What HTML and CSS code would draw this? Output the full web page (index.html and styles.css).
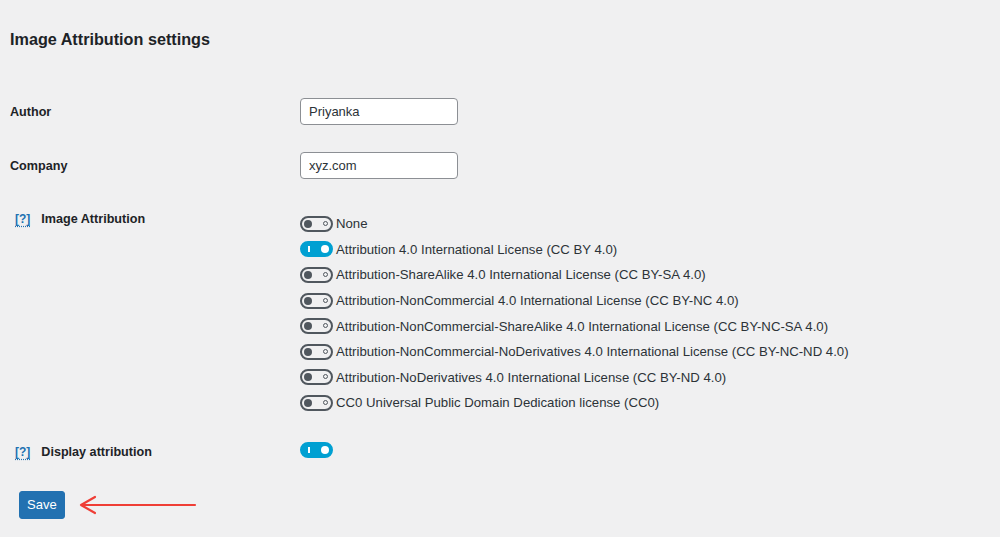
FILE: index.html
```html
<!DOCTYPE html>
<html lang="en">
<head>
    <meta charset="UTF-8">
    <title>Image Attribution settings</title>
    <link rel="stylesheet" href="styles.css">
</head>
<body>

<div class="wrap">
    <h2 class="page-title">Image Attribution settings</h2>

    <div class="form-row">
        <div class="label">Author</div>
        <div class="field"><input type="text" class="text-input" value="Priyanka"></div>
    </div>

    <div class="form-row">
        <div class="label">Company</div>
        <div class="field"><input type="text" class="text-input" value="xyz.com"></div>
    </div>

    <div class="form-row top">
        <div class="label"><a class="help" href="#">[?]</a>Image Attribution</div>
        <div class="field">
            <ul class="options">
                <li><span class="toggle"></span>None</li>
                <li><span class="toggle on"></span>Attribution 4.0 International License (CC BY 4.0)</li>
                <li><span class="toggle"></span>Attribution-ShareAlike 4.0 International License (CC BY-SA 4.0)</li>
                <li><span class="toggle"></span>Attribution-NonCommercial 4.0 International License (CC BY-NC 4.0)</li>
                <li><span class="toggle"></span>Attribution-NonCommercial-ShareAlike 4.0 International License (CC BY-NC-SA 4.0)</li>
                <li><span class="toggle"></span>Attribution-NonCommercial-NoDerivatives 4.0 International License (CC BY-NC-ND 4.0)</li>
                <li><span class="toggle"></span>Attribution-NoDerivatives 4.0 International License (CC BY-ND 4.0)</li>
                <li><span class="toggle"></span>CC0 Universal Public Domain Dedication license (CC0)</li>
            </ul>
        </div>
    </div>

    <div class="form-row display">
        <div class="label"><a class="help" href="#">[?]</a>Display attribution</div>
        <div class="field"><span class="toggle on"></span></div>
    </div>

    <div class="submit-row">
        <button class="save-btn">Save</button>
        <!-- red arrow pointing at the button -->
        <svg class="arrow" width="120" height="22" viewBox="0 0 120 22">
            <path d="M4 11 H118 M4 11 L18 3 M4 11 L18 19" fill="none" stroke="#ef3e36" stroke-width="2.2" stroke-linecap="round"/>
        </svg>
    </div>
</div>

</body>
</html>
```

FILE: styles.css
```css
body {
    margin: 0;
    background-color: #f0f0f1;
    color: #1d2327;
    font-family: "Liberation Sans", Arial, sans-serif;
    font-size: 13px;
}
.wrap {
    padding: 28px 0 0 10px;
}
.page-title {
    margin: 0 0 48px 0;
    font-size: 16.2px;
    line-height: 22px;
    font-weight: 700;
}
.form-row {
    display: grid;
    grid-template-columns: 290px 1fr;
    align-items: center;
    margin-bottom: 27px;
}
.form-row.top {
    align-items: start;
    margin-top: 30px;
    margin-bottom: 26px;
}
.form-row.display {
    height: 20px;
    margin-bottom: 29px;
}
.label {
    font-size: 12.6px;
    font-weight: 700;
    line-height: 20px;
}
.help {
    color: #2271b1;
    font-size: 12px;
    margin: 0 11px 0 5px;
    text-decoration: underline;
    text-decoration-style: dotted;
    text-underline-offset: 3px;
}
.text-input {
    box-sizing: border-box;
    width: 158px;
    height: 27px;
    padding: 0 8px;
    border: 1px solid #8c8f94;
    border-radius: 4px;
    background: #fff;
    color: #2c3338;
    font-family: inherit;
    font-size: 13px;
}
.options {
    list-style: none;
    margin: 2px 0 0 0;
    padding: 0;
}
.options li {
    display: flex;
    align-items: center;
    height: 25.6px;
    font-size: 13.2px;
    color: #2c3338;
}
.toggle {
    box-sizing: border-box;
    position: relative;
    display: inline-block;
    width: 33px;
    height: 16px;
    margin-right: 3px;
    border: 2px solid #50575e;
    border-radius: 8px;
    background: transparent;
}
/* knob on the left when off */
.toggle::before {
    content: "";
    position: absolute;
    left: 2px;
    top: 2px;
    width: 8px;
    height: 8px;
    border-radius: 50%;
    background: #50575e;
}
/* small ring on the right when off */
.toggle::after {
    content: "";
    position: absolute;
    right: 3px;
    top: 3px;
    width: 3px;
    height: 3px;
    border: 1.5px solid #50575e;
    border-radius: 50%;
}
.toggle.on {
    background: #00a0d2;
    border-color: #00a0d2;
}
.toggle.on::before {
    left: auto;
    right: 2px;
    background: #fff;
}
.toggle.on::after {
    right: auto;
    left: 6px;
    top: 3px;
    width: 2px;
    height: 6px;
    border: none;
    border-radius: 0;
    background: #fff;
}
.submit-row {
    display: flex;
    align-items: center;
    gap: 12px;
    padding-left: 9px;
}
.save-btn {
    height: 28px;
    padding: 0 7px;
    background-color: #2271b1;
    border: 1px solid #2271b1;
    border-radius: 3px;
    color: #fff;
    font-family: inherit;
    font-size: 13px;
    cursor: pointer;
}
```
